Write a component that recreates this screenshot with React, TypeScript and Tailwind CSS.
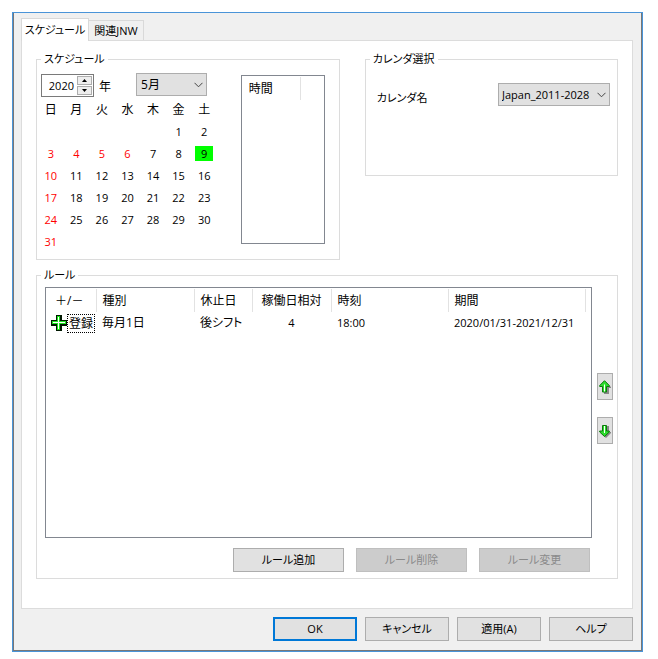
import { useState } from 'react';
import type { ReactNode } from 'react';

const WEEKDAYS = ['日', '月', '火', '水', '木', '金', '土'];
const FIRST_WEEKDAY = 5;
const DAYS_IN_MONTH = 31;
const HOLIDAYS = [3, 4, 5, 6, 10, 17, 24, 31];
const RUN_DAYS = [9];

const rules = [
  { action: '登録', type: '毎月1日', shift: '後シフト', offset: '4', time: '18:00', period: '2020/01/31-2021/12/31' },
];

function getWeeks() {
  const cells: (number | null)[] = Array(FIRST_WEEKDAY).fill(null);
  for (let d = 1; d <= DAYS_IN_MONTH; d++) {
    cells.push(d);
  }
  while (cells.length % 7 !== 0) {
    cells.push(null);
  }
  const weeks = [];
  for (let i = 0; i < cells.length; i += 7) {
    weeks.push(cells.slice(i, i + 7));
  }
  return weeks;
}

function Group({ title, className = '', children }: { title: string; className?: string; children: ReactNode }) {
  return (
    <fieldset className={`min-w-0 border border-[#dcdcdc] ${className}`}>
      <legend className="ml-1 h-4 px-[3px] text-[11px] leading-4">{title}</legend>
      {children}
    </fieldset>
  );
}

function Chevron() {
  return (
    <svg className="pointer-events-none absolute top-[9px] right-1 h-[6px] w-[9px]" viewBox="0 0 9 6" fill="none" stroke="#444" aria-hidden="true">
      <path d="M0.5 0.8 4.5 4.8 8.5 0.8" />
    </svg>
  );
}

function PlusIcon() {
  return (
    <svg className="h-4 w-4 shrink-0" viewBox="0 0 16 16" shapeRendering="crispEdges" aria-hidden="true">
      <path d="M5 0h6v5h5v6h-5v5H5v-5H0V5h5z" fill="#001800" />
      <path d="M6 1h3v5h6v3H9v6H6V9H1V6h5z" fill="#1ee61e" />
      <path d="M7 2h1v5h6v1H8v6H7V8H2V7h5z" fill="#fff" />
    </svg>
  );
}

function ArrowIcon({ down = false }: { down?: boolean }) {
  return (
    <svg className="h-[14px] w-3 shrink-0" viewBox="0 0 12 14" aria-hidden="true">
      {down ? (
        <>
          <path d="M5 2h5v6h2v1l-5 5-3-3z" fill="#888" />
          <path d="M3.500 1.500h4V7h2.800v1L5.500 12.500 0.700 8V7h2.800z" fill="#2ddc2d" stroke="#0a7a0a" />
          <path d="M5.500 2v7" stroke="#fff" />
        </>
      ) : (
        <>
          <path d="M7 2 12 7v1h-2v6H5v-2h2z" fill="#888" />
          <path d="M5.500 0.700 10.300 5.500v1H7.500v5.500h-4V6.500H0.700v-1z" fill="#2ddc2d" stroke="#0a7a0a" />
          <path d="M5.500 4.500v7" stroke="#fff" />
        </>
      )}
    </svg>
  );
}

function PushButton({ children, primary, disabled, wide }: { children: ReactNode; primary?: boolean; disabled?: boolean; wide?: boolean }) {
  return (
    <button
      type="button"
      disabled={disabled}
      className={`h-6 text-[11px] leading-5 ${wide ? 'w-[111px]' : 'w-[84px]'} ${
        primary ? 'border-2 border-[#0078d7]' : disabled ? 'border border-[#bfbfbf]' : 'border border-[#adadad]'
      } ${disabled ? 'bg-[#cccccc] text-[#8a8a8a]' : 'bg-[#e1e1e1]'}`}
    >
      {children}
    </button>
  );
}

function SchedulePanel() {
  const [year, setYear] = useState(2020);

  return (
    <Group title="スケジュール">
      <div className="flex justify-between pr-[14px] pb-[7px] pl-px">
        <div className="pt-[6px]">
          <div className="flex h-6 items-end pl-[3px]">
            <div className="flex h-[23px] w-[53px] border border-[#7a7a7a] bg-white p-px">
              <input
                id="year"
                value={year}
                onChange={(e) => setYear(Number(e.target.value) || 0)}
                className="w-0 min-w-0 flex-1 pr-[3px] text-right text-[11px] outline-none"
              />
              <div className="flex w-[15px] flex-col gap-px">
                <button type="button" aria-label="+" onClick={() => setYear(year + 1)} className="flex flex-1 items-center justify-center border border-[#adadad] bg-[#eeeeee]">
                  <svg className="h-[3px] w-[5px]" viewBox="0 0 5 3" aria-hidden="true"><path d="M2.500 0 5 3H0z" /></svg>
                </button>
                <button type="button" aria-label="-" onClick={() => setYear(year - 1)} className="flex flex-1 items-center justify-center border border-[#adadad] bg-[#eeeeee]">
                  <svg className="h-[3px] w-[5px]" viewBox="0 0 5 3" aria-hidden="true"><path d="M0 0h5L2.500 3z" /></svg>
                </button>
              </div>
            </div>
            <label htmlFor="year" className="ml-[5px] leading-5">年</label>
            <div className="relative mb-px ml-[25px]">
              <select aria-label="月" defaultValue="5月" className="h-[23px] w-[71px] appearance-none border border-[#adadad] bg-[#e1e1e1] pl-1">
                <option>5月</option>
              </select>
              <Chevron />
            </div>
          </div>
          <table className="mt-[2px] w-[179px] table-fixed text-center">
            <thead>
              <tr>
                {WEEKDAYS.map((day) => (
                  <th key={day} className="h-[21px] p-0 font-normal">{day}</th>
                ))}
              </tr>
            </thead>
            <tbody className="text-[11px]">
              {getWeeks().map((week, i) => (
                <tr key={i}>
                  {week.map((day, j) => (
                    <td key={j} className={`h-[22px] p-0 ${day && HOLIDAYS.includes(day) ? 'text-[#ff0000]' : ''}`}>
                      {day && (
                        <span className={`mx-auto block h-[15px] w-[18px] leading-[15px] ${RUN_DAYS.includes(day) ? 'bg-[#00ff00]' : ''}`}>
                          {day}
                        </span>
                      )}
                    </td>
                  ))}
                </tr>
              ))}
            </tbody>
          </table>
        </div>
        <div className="mt-2 h-[169px] w-[84px] border border-[#828790]">
          <table className="mt-px w-full table-fixed">
            <thead>
              <tr>
                <th className="h-[23px] w-[59px] border-r border-[#e2e2e2] p-0 pl-[7px] text-left font-normal">時間</th>
                <th className="p-0"></th>
              </tr>
            </thead>
          </table>
        </div>
      </div>
    </Group>
  );
}

function RulePanel() {
  const th = 'h-[23px] border-r border-[#e2e2e2] p-0 text-left font-normal';
  const td = 'h-[22px] p-0 pl-[6px]';

  return (
    <Group title="ルール" className="mt-[7px]">
      <div className="pt-1 pr-1 pb-[6px] pl-2">
        <div className="flex items-center gap-[5px]">
          <div className="h-[251px] min-w-0 flex-1 border border-[#828790]">
            <table className="mt-px w-full table-fixed whitespace-nowrap">
              <thead>
                <tr>
                  <th className={`${th} w-[50px] pl-[9px]`}>＋/－</th>
                  <th className={`${th} w-[98px] pl-[6px]`}>種別</th>
                  <th className={`${th} w-[58px] pl-[6px]`}>休止日</th>
                  <th className="h-[23px] w-[79px] border-r border-[#e2e2e2] p-0 text-center font-normal">稼働日相対</th>
                  <th className={`${th} w-[117px] pl-[6px]`}>時刻</th>
                  <th className={`${th} pl-[6px]`}>期間</th>
                  <th className="w-[6px] p-0"></th>
                </tr>
              </thead>
              <tbody>
                {rules.map((rule) => (
                  <tr key={rule.type}>
                    <td className="h-[22px] p-0 pl-[5px]">
                      <div className="flex items-center">
                        <PlusIcon />
                        <span className="h-[19px] border border-dotted border-black px-px leading-[17px]">{rule.action}</span>
                      </div>
                    </td>
                    <td className={td}>{rule.type}</td>
                    <td className={td}>{rule.shift}</td>
                    <td className="p-0 text-center text-[11px]">{rule.offset}</td>
                    <td className={`${td} text-[11px]`}>{rule.time}</td>
                    <td className={`${td} text-[11px]`}>{rule.period}</td>
                    <td></td>
                  </tr>
                ))}
              </tbody>
            </table>
          </div>
          <div className="flex flex-col gap-[17px] pb-2">
            <button type="button" aria-label="↑" className="flex h-[27px] w-4 items-center justify-center border border-[#adadad] bg-[#e1e1e1]">
              <ArrowIcon />
            </button>
            <button type="button" aria-label="↓" className="flex h-[27px] w-4 items-center justify-center border border-[#adadad] bg-[#e1e1e1]">
              <ArrowIcon down />
            </button>
          </div>
        </div>
        <div className="mt-[10px] mr-[23px] flex justify-end gap-3">
          <PushButton wide>ルール追加</PushButton>
          <PushButton wide disabled>ルール削除</PushButton>
          <PushButton wide disabled>ルール変更</PushButton>
        </div>
      </div>
    </Group>
  );
}

export default function App() {
  return (
    <div className="bg-white pt-3 pr-[15px] pb-2 pl-3 font-['Open_Sans','Noto_Sans_CJK_JP',sans-serif] text-[12px] leading-4 text-black [font-feature-settings:'palt']">
      <div className="border border-[#4a94d8]">
        <div className="border border-t-0 border-[#777777] bg-[#f0f0f0] pt-[5px] pr-[8px] pb-[9px] pl-[7px]">
          <div role="tablist" className="flex items-end text-[11px]">
            <button type="button" role="tab" aria-selected="true" className="relative -mb-px h-[23px] w-[68px] border border-b-0 border-[#d9d9d9] bg-white whitespace-nowrap">
              スケジュール
            </button>
            <button type="button" role="tab" aria-selected="false" className="h-5 w-[55px] border border-b-0 border-l-0 border-[#d9d9d9] bg-[#f0f0f0] whitespace-nowrap">
              関連JNW
            </button>
          </div>
          <div className="border border-[#dcdcdc] bg-white px-[14px] pt-[10px] pb-[29px]">
            <div className="grid grid-cols-[6fr_5fr] items-start gap-[25px]">
              <SchedulePanel />
              <Group title="カレンダ選択">
                <div className="flex items-end justify-between pt-4 pr-[7px] pb-[69px] pl-[11px]">
                  <label htmlFor="calendar" className="text-[11px]">カレンダ名</label>
                  <div className="relative">
                    <select id="calendar" defaultValue="Japan_2011-2028" className="h-[23px] w-[112px] appearance-none border border-[#adadad] bg-[#e1e1e1] pl-[3px] text-[11px]">
                      <option>Japan_2011-2028</option>
                    </select>
                    <Chevron />
                  </div>
                </div>
              </Group>
            </div>
            <RulePanel />
          </div>
          <div className="mt-2 flex justify-end gap-2">
            <PushButton primary>OK</PushButton>
            <PushButton>キャンセル</PushButton>
            <PushButton>適用(A)</PushButton>
            <PushButton>ヘルプ</PushButton>
          </div>
        </div>
      </div>
    </div>
  );
}
